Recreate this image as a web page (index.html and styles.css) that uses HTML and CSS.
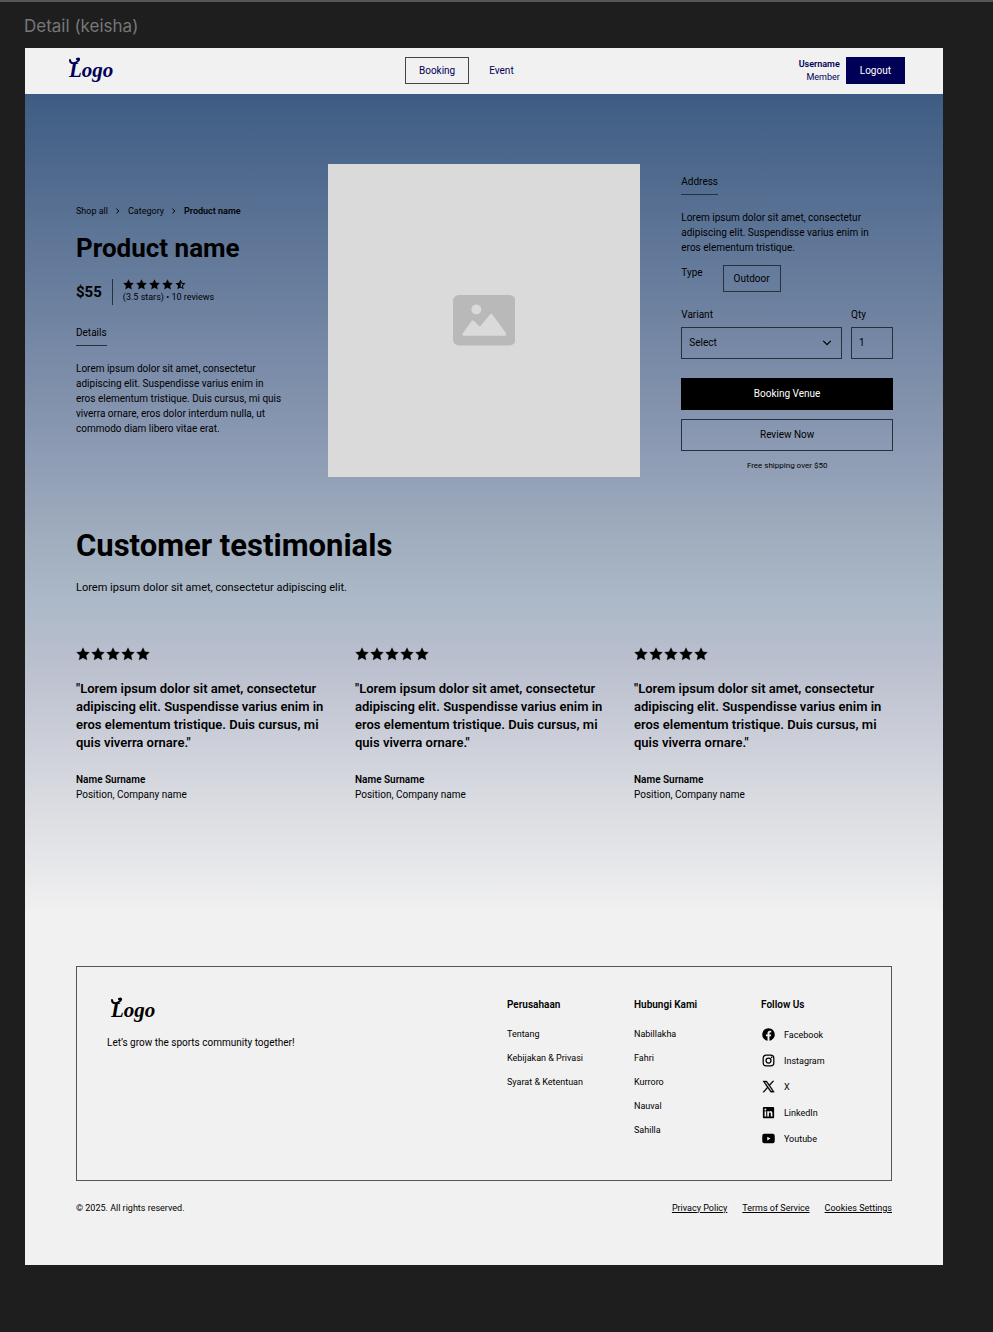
FILE: index.html
```html
<!DOCTYPE html>
<html lang="en">
<head>
<meta charset="utf-8">
<meta name="viewport" content="width=device-width, initial-scale=1">
<title>Detail (keisha)</title>
<link rel="stylesheet" href="styles.css">
</head>
<body>
<svg class="sprite" aria-hidden="true">
  <symbol id="star" viewBox="0 0 24 24"><path d="M12 1.200l3.300 7.100 7.700.9-5.700 5.300 1.500 7.700L12 18.400l-6.800 3.800 1.500-7.700L1 9.200l7.700-.9z" stroke="currentColor" stroke-width=".5" stroke-linejoin="round"/></symbol>
  <symbol id="star-half" viewBox="0 0 24 24"><path fill-rule="evenodd" d="M12 1.200l3.300 7.100 7.700.9-5.700 5.300 1.500 7.700L12 18.400l-6.800 3.800 1.500-7.700L1 9.200l7.700-.9zM12.400 6.500v9.800l3.700 2.100-.9-4.600 3.400-3.100-4.600-.6z"/></symbol>
  <symbol id="chevron" viewBox="0 0 24 24"><path d="M8 6l6 6-6 6" fill="none" stroke="currentColor" stroke-width="2.400"/></symbol>
</svg>
<p class="frame-name">Detail (keisha)</p>
<div class="frame">
  <header class="navbar">
    <a class="logo" href="#" aria-label="Logo"><svg viewBox="0 0 48 28" width="48" height="28"><text x="1" y="20">Logo</text><path d="M2 3c0 4 5 4 8 1c2-2 1-3-1-2"/></svg></a>
    <nav class="tabs">
      <a class="box" href="#">Booking</a>
      <a href="#">Event</a>
    </nav>
    <div class="account">
      <div class="who"><strong>Username</strong><span>Member</span></div>
      <button class="logout" type="button">Logout</button>
    </div>
  </header>

  <main class="page">
    <section class="product">
      <div class="summary">
        <nav class="crumbs" aria-label="Breadcrumb">
          <a href="#">Shop all</a><svg><use href="#chevron"/></svg>
          <a href="#">Category</a><svg><use href="#chevron"/></svg>
          <strong>Product name</strong>
        </nav>
        <h1>Product name</h1>
        <div class="price-row">
          <span class="price">$55</span>
          <div class="rating">
            <div class="stars small"><svg><use href="#star"/></svg><svg><use href="#star"/></svg><svg><use href="#star"/></svg><svg><use href="#star"/></svg><svg><use href="#star-half"/></svg></div>
            <span>(3.5 stars) • 10 reviews</span>
          </div>
        </div>
        <h2 class="tab">Details</h2>
        <p>Lorem ipsum dolor sit amet, consectetur adipiscing elit. Suspendisse varius enim in eros elementum tristique. Duis cursus, mi quis viverra ornare, eros dolor interdum nulla, ut commodo diam libero vitae erat.</p>
      </div>
      <div class="photo">
        <svg viewBox="0 0 63 51" role="img" aria-label="Product image">
          <rect width="63" height="51" rx="6" fill="#b9b9b9"/>
          <circle cx="23.500" cy="14.500" r="5" fill="#dadada"/>
          <path d="M9.500 39L19 26q1-1 2 0l6 6L37.500 19.500q1-1 2 0L53.500 38.500V40q0 1-1 1H10.500q-1 0-1-1z" fill="#dadada"/>
        </svg>
      </div>
      <form class="order">
        <h2 class="tab">Address</h2>
        <p>Lorem ipsum dolor sit amet, consectetur adipiscing elit. Suspendisse varius enim in eros elementum tristique.</p>
        <div class="type"><span>Type</span><button class="box" type="button">Outdoor</button></div>
        <div class="fields">
          <div class="field">
            <label for="variant">Variant</label>
            <div class="pick">
              <select id="variant"><option>Select</option></select>
              <svg viewBox="0 0 24 24"><path d="M3 7l9 9 9-9" fill="none" stroke="currentColor" stroke-width="3"/></svg>
            </div>
          </div>
          <div class="field">
            <label for="qty">Qty</label>
            <input id="qty" type="text" value="1">
          </div>
        </div>
        <div class="actions">
          <button class="primary" type="button">Booking Venue</button>
          <button type="button">Review Now</button>
          <small>Free shipping over $50</small>
        </div>
      </form>
    </section>

    <section class="testimonials">
      <h2>Customer testimonials</h2>
      <p class="lead">Lorem ipsum dolor sit amet, consectetur adipiscing elit.</p>
      <div class="quotes">
        <figure>
          <div class="stars"><svg><use href="#star"/></svg><svg><use href="#star"/></svg><svg><use href="#star"/></svg><svg><use href="#star"/></svg><svg><use href="#star"/></svg></div>
          <blockquote>"Lorem ipsum dolor sit amet, consectetur adipiscing elit. Suspendisse varius enim in eros elementum tristique. Duis cursus, mi quis viverra ornare."</blockquote>
          <figcaption><strong>Name Surname</strong><span>Position, Company name</span></figcaption>
        </figure>
        <figure>
          <div class="stars"><svg><use href="#star"/></svg><svg><use href="#star"/></svg><svg><use href="#star"/></svg><svg><use href="#star"/></svg><svg><use href="#star"/></svg></div>
          <blockquote>"Lorem ipsum dolor sit amet, consectetur adipiscing elit. Suspendisse varius enim in eros elementum tristique. Duis cursus, mi quis viverra ornare."</blockquote>
          <figcaption><strong>Name Surname</strong><span>Position, Company name</span></figcaption>
        </figure>
        <figure>
          <div class="stars"><svg><use href="#star"/></svg><svg><use href="#star"/></svg><svg><use href="#star"/></svg><svg><use href="#star"/></svg><svg><use href="#star"/></svg></div>
          <blockquote>"Lorem ipsum dolor sit amet, consectetur adipiscing elit. Suspendisse varius enim in eros elementum tristique. Duis cursus, mi quis viverra ornare."</blockquote>
          <figcaption><strong>Name Surname</strong><span>Position, Company name</span></figcaption>
        </figure>
      </div>
    </section>
  </main>

  <footer class="footer">
    <div class="card">
      <div class="brand">
        <a class="logo" href="#" aria-label="Logo"><svg viewBox="0 0 48 28" width="48" height="28"><text x="1" y="20">Logo</text><path d="M2 3c0 4 5 4 8 1c2-2 1-3-1-2"/></svg></a>
        <p>Let’s grow the sports community together!</p>
      </div>
      <div class="links">
        <div>
          <h3>Perusahaan</h3>
          <ul>
            <li><a href="#">Tentang</a></li>
            <li><a href="#">Kebijakan &amp; Privasi</a></li>
            <li><a href="#">Syarat &amp; Ketentuan</a></li>
          </ul>
        </div>
        <div>
          <h3>Hubungi Kami</h3>
          <ul>
            <li><a href="#">Nabillakha</a></li>
            <li><a href="#">Fahri</a></li>
            <li><a href="#">Kurroro</a></li>
            <li><a href="#">Nauval</a></li>
            <li><a href="#">Sahilla</a></li>
          </ul>
        </div>
        <div>
          <h3>Follow Us</h3>
          <ul class="social">
            <li><a href="#"><svg viewBox="0 0 24 24"><path d="M22 12.060C22 6.500 17.520 2 12 2S2 6.500 2 12.060c0 5.020 3.660 9.180 8.440 9.940v-7.030H7.900v-2.910h2.540V9.850c0-2.520 1.490-3.910 3.780-3.910 1.090 0 2.240.2 2.240.2v2.470h-1.260c-1.240 0-1.630.78-1.630 1.570v1.880h2.780l-.45 2.910h-2.330V22C18.340 21.240 22 17.080 22 12.060z"/></svg>Facebook</a></li>
            <li><a href="#"><svg viewBox="0 0 24 24"><g fill="none" stroke="currentColor" stroke-width="2"><rect x="3.500" y="3.500" width="17" height="17" rx="5"/><circle cx="12" cy="12" r="4"/></g><circle cx="17" cy="7" r="1.300"/></svg>Instagram</a></li>
            <li><a href="#"><svg viewBox="0 0 24 24"><path fill-rule="evenodd" d="M3 3h6.100l4.300 5.900L18.600 3h2.200l-6.400 7.300L21.500 21h-6.100l-4.700-6.500L5 21H2.800l6.900-7.900zm3 1.700L16.200 19.300h2.300L8.300 4.700z" stroke="currentColor" stroke-width=".5"/></svg>X</a></li>
            <li><a href="#"><svg viewBox="0 0 24 24"><path fill-rule="evenodd" d="M4.500 3h15A1.500 1.500 0 0 1 21 4.500v15a1.500 1.500 0 0 1-1.500 1.500h-15A1.500 1.500 0 0 1 3 19.500v-15A1.500 1.500 0 0 1 4.500 3zM5.700 9.800v8.500h2.600V9.800zM7 5.500a1.600 1.600 0 1 0 0 3.200 1.600 1.600 0 0 0 0-3.200zM10 9.800v8.500h2.700v-4.200c0-2.700 2.900-2.600 2.900 0v4.200h2.700v-5.100c0-4.200-4.200-4.300-5.600-2.200V9.800z"/></svg>LinkedIn</a></li>
            <li><a href="#"><svg viewBox="0 0 24 24"><path fill-rule="evenodd" d="M5 4.500Q12 4 19 4.500q2.700.2 2.900 2.900.3 4.600 0 9.200-.2 2.700-2.900 2.900-7 .5-14 0-2.700-.2-2.900-2.900-.3-4.600 0-9.200Q2.300 4.700 5 4.500zM10 9v6l5.200-3z"/></svg>Youtube</a></li>
          </ul>
        </div>
      </div>
    </div>
    <div class="legal">
      <span>© 2025. All rights reserved.</span>
      <nav><a href="#">Privacy Policy</a><a href="#">Terms of Service</a><a href="#">Cookies Settings</a></nav>
    </div>
  </footer>
</div>
</body>
</html>
```
FILE: styles.css
```css
* { box-sizing: border-box; margin: 0; padding: 0; }

body {
  background: #1e1e1e;
  border-top: 2px solid #555;
  color: #000;
  font: 10px/15px Roboto, "Liberation Sans", sans-serif;
}

a { color: inherit; text-decoration: none; }
ul { list-style: none; }
svg { display: block; fill: currentColor; }
button, input, select {
  font: inherit;
  color: inherit;
  background: none;
  border: 1px solid #27303d;
  border-radius: 0;
}
.sprite { position: absolute; width: 0; height: 0; }

.frame-name {
  padding: 14px 24px 12px;
  font: 17px/20px Inter, sans-serif;
  color: #777;
}
.frame { margin: 0 50px 67px 25px; background: #f1f1f1; }

/* Navigation */
.navbar {
  display: flex;
  justify-content: space-between;
  align-items: center;
  height: 46px;
  padding: 0 38px 1px 43px;
  color: #000056;
}
.logo { display: block; width: 52px; }
.logo text { font: italic bold 21px "Liberation Serif", serif; }
.logo path { fill: none; stroke: currentColor; stroke-width: 2; stroke-linecap: round; }
.tabs { display: flex; align-items: center; gap: 20px; }
.box { padding: 5px 13px; border: 1px solid #444; line-height: 15px; }
.account { display: flex; align-items: center; gap: 6px; }
.who { text-align: right; font-size: 9px; line-height: 13px; }
.who strong, .who span { display: block; }
.logout { padding: 5px 13px; background: #000056; border-color: #000056; color: #fff; }

/* Product */
.page {
  padding: 70px 50px 113px 51px;
  background: linear-gradient(#3e5c83, #8c9ab3 43%, #a0adbe 54%, #acb9c8 62%, #babfce 69%, #d9dbe1 86%, #f1f1f1);
}
.product {
  display: grid;
  grid-template-columns: 211fr 313fr 212fr;
  gap: 41px;
  align-items: center;
}
.summary { padding-bottom: 1px; }
.summary p { padding-right: 4px; }
.crumbs { display: flex; align-items: center; gap: 5px; font-size: 9px; line-height: 14px; }
.crumbs svg { width: 10px; height: 10px; }
h1 { margin: 15px 0; font-size: 26px; line-height: 31px; font-weight: 700; }
.price-row { display: flex; align-items: center; margin-bottom: 20px; }
.price { padding-right: 10px; font-size: 15px; line-height: 26px; font-weight: 700; border-right: 1px solid #27303d; }
.rating { padding-left: 10px; font-size: 9px; line-height: 14px; }
.stars { display: flex; gap: 1px; }
.stars svg { width: 14px; height: 14px; }
.stars.small { gap: 2px; }
.stars.small svg { width: 11px; height: 11px; }
.tab {
  width: fit-content;
  margin-bottom: 15px;
  padding-bottom: 5px;
  border-bottom: 1px solid #27303d;
  font-size: 10px;
  font-weight: 400;
}
.photo { display: grid; place-items: center; aspect-ratio: 1; background: #dadada; }
.photo svg { width: 20%; }

.order { padding-top: 5px; }
.order p { padding-right: 10px; }
.order .box { border-color: #27303d; padding: 5px 10px; }
.type { display: flex; gap: 20px; margin: 10px 0 15px; }
.fields { display: grid; grid-template-columns: 161fr 42fr; gap: 9px; }
.field label { display: block; margin-bottom: 5px; }
.pick { position: relative; }
.pick svg { position: absolute; right: 10px; top: 11px; width: 10px; height: 10px; pointer-events: none; }
select, input { width: 100%; height: 32px; padding: 0 7px; appearance: none; }
.actions { display: grid; gap: 9px; margin-top: 19px; }
.actions button { height: 32px; }
.actions .primary { background: #000; border-color: #000; color: #fff; }
.actions small { font-size: 8px; line-height: 12px; text-align: center; }

/* Testimonials */
.testimonials { padding-top: 50px; }
.testimonials h2 { margin-bottom: 15px; font-size: 31px; line-height: 37px; font-weight: 700; }
.lead { font-size: 11px; line-height: 17px; }
.quotes { display: grid; grid-template-columns: repeat(3, 1fr); gap: 20px; margin-top: 51px; }
blockquote { margin: 19px 0 20px; font-size: 13px; line-height: 18px; font-weight: 600; }
figcaption strong, figcaption span { display: block; }
strong, h3 { font-weight: 600; }

/* Footer */
.footer { padding: 51px 51px 50px; }
.card { display: flex; justify-content: space-between; padding: 30px 29px 28px 30px; border: 1px solid #555; }
.brand .logo { margin: 0 0 10px 3px; }
.links { display: grid; grid-template-columns: repeat(3, 101px); gap: 26px; }
h3 { margin-bottom: 10px; font-size: 10px; }
.links a { display: block; padding: 5px 0; font-size: 9px; line-height: 14px; }
.links .social a { display: flex; align-items: center; gap: 8px; line-height: 16px; }
.social svg { width: 15px; height: 15px; }
.legal { display: flex; justify-content: space-between; margin-top: 20px; font-size: 9px; line-height: 14px; }
.legal nav { display: flex; gap: 15px; }
.legal a { text-decoration: underline; }
```
